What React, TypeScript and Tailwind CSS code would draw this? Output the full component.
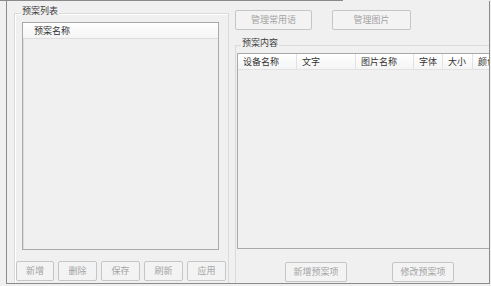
const font = { fontFamily: '"Noto Sans CJK SC", "Liberation Sans", sans-serif' };

function Btn({ label, className = "" }: { label: string; className?: string }) {
  return (
    <div
      className={`flex h-[20px] items-center justify-center rounded-[2px] border border-[#c6c6c6] bg-[#f3f3f3] text-[9px] text-[#a3a3a3] ${className}`}
    >
      {label}
    </div>
  );
}

const columns = [
  { name: "设备名称", w: "w-[59px]" },
  { name: "文字", w: "w-[59px]" },
  { name: "图片名称", w: "w-[58px]" },
  { name: "字体", w: "w-[29px]" },
  { name: "大小", w: "w-[30px]" },
  { name: "颜色", w: "w-[30px]" },
];

export default function App() {
  return (
    <div className="h-[286px] w-[491px] overflow-hidden bg-[#f0f0f0]" style={font}>
      {/* top edge of the window above */}
      <div className="h-[1px] w-[343px] bg-[#8a8a8a]" />

      <div className="ml-[6px] flex h-[283px] w-[484px] border-r border-b border-l border-[#8c8c8c]">
        {/* Left: 预案列表 */}
        <div className="ml-[7px] flex w-[215px] flex-col pt-[12px]">
          <div className="flex flex-1 flex-col border-t border-r border-l border-[#dadada] shadow-[inset_1px_1px_0_#ffffff]">
            <div className="-mt-[10px] ml-[6px] w-fit bg-[#f0f0f0] px-[1px] text-[9px] leading-[14px] text-[#3c3c3c]">
              预案列表
            </div>
            <div className="ml-[7px] mt-[4px] flex h-[228px] w-[197px] flex-col border border-[#a9a9a9] shadow-[inset_1px_1px_0_#dcdcdc]">
              <div className="flex h-[16px] items-center border-b border-[#dedede] bg-gradient-to-b from-[#ffffff] to-[#f4f4f4] pl-[11px] text-[9px] text-[#333333]">
                预案名称
              </div>
            </div>
            <div className="mt-[11px] flex gap-[4px] pl-[1px]">
              <Btn label="新增" className="w-[38px]" />
              <Btn label="删除" className="w-[39px]" />
              <Btn label="保存" className="w-[39px]" />
              <Btn label="刷新" className="w-[39px]" />
              <Btn label="应用" className="w-[39px]" />
            </div>
          </div>
        </div>

        {/* Right: 预案内容 */}
        <div className="ml-[6px] flex flex-1 flex-col overflow-hidden">
          <div className="mt-[9px] flex gap-[20px]">
            <Btn label="管理常用语" className="h-[19px] w-[77px]" />
            <Btn label="管理图片" className="h-[19px] w-[79px]" />
          </div>
          <div className="mt-[15px] flex flex-1 flex-col border-t border-l border-[#dadada]">
            <div className="-mt-[10px] ml-[5px] w-fit bg-[#f0f0f0] px-[1px] text-[9px] leading-[14px] text-[#3c3c3c]">
              预案内容
            </div>
            <div className="ml-[1px] mt-[3px] flex h-[196px] w-[260px] flex-col border-b border-l border-t border-[#a9a9a9]">
              <div className="flex h-[16px] shrink-0 bg-gradient-to-b from-[#ffffff] to-[#f4f4f4]">
                {columns.map((c) => (
                  <div
                    key={c.name}
                    className={`${c.w} flex shrink-0 items-center border-r border-b border-[#e2e2e2] pl-[5px] text-[9px] whitespace-nowrap text-[#333333]`}
                  >
                    {c.name}
                  </div>
                ))}
              </div>
            </div>
            <div className="mt-[13px] flex gap-[45px] pl-[49px]">
              <Btn label="新增预案项" className="w-[62px]" />
              <Btn label="修改预案项" className="w-[62px]" />
            </div>
          </div>
        </div>
      </div>
    </div>
  );
}
